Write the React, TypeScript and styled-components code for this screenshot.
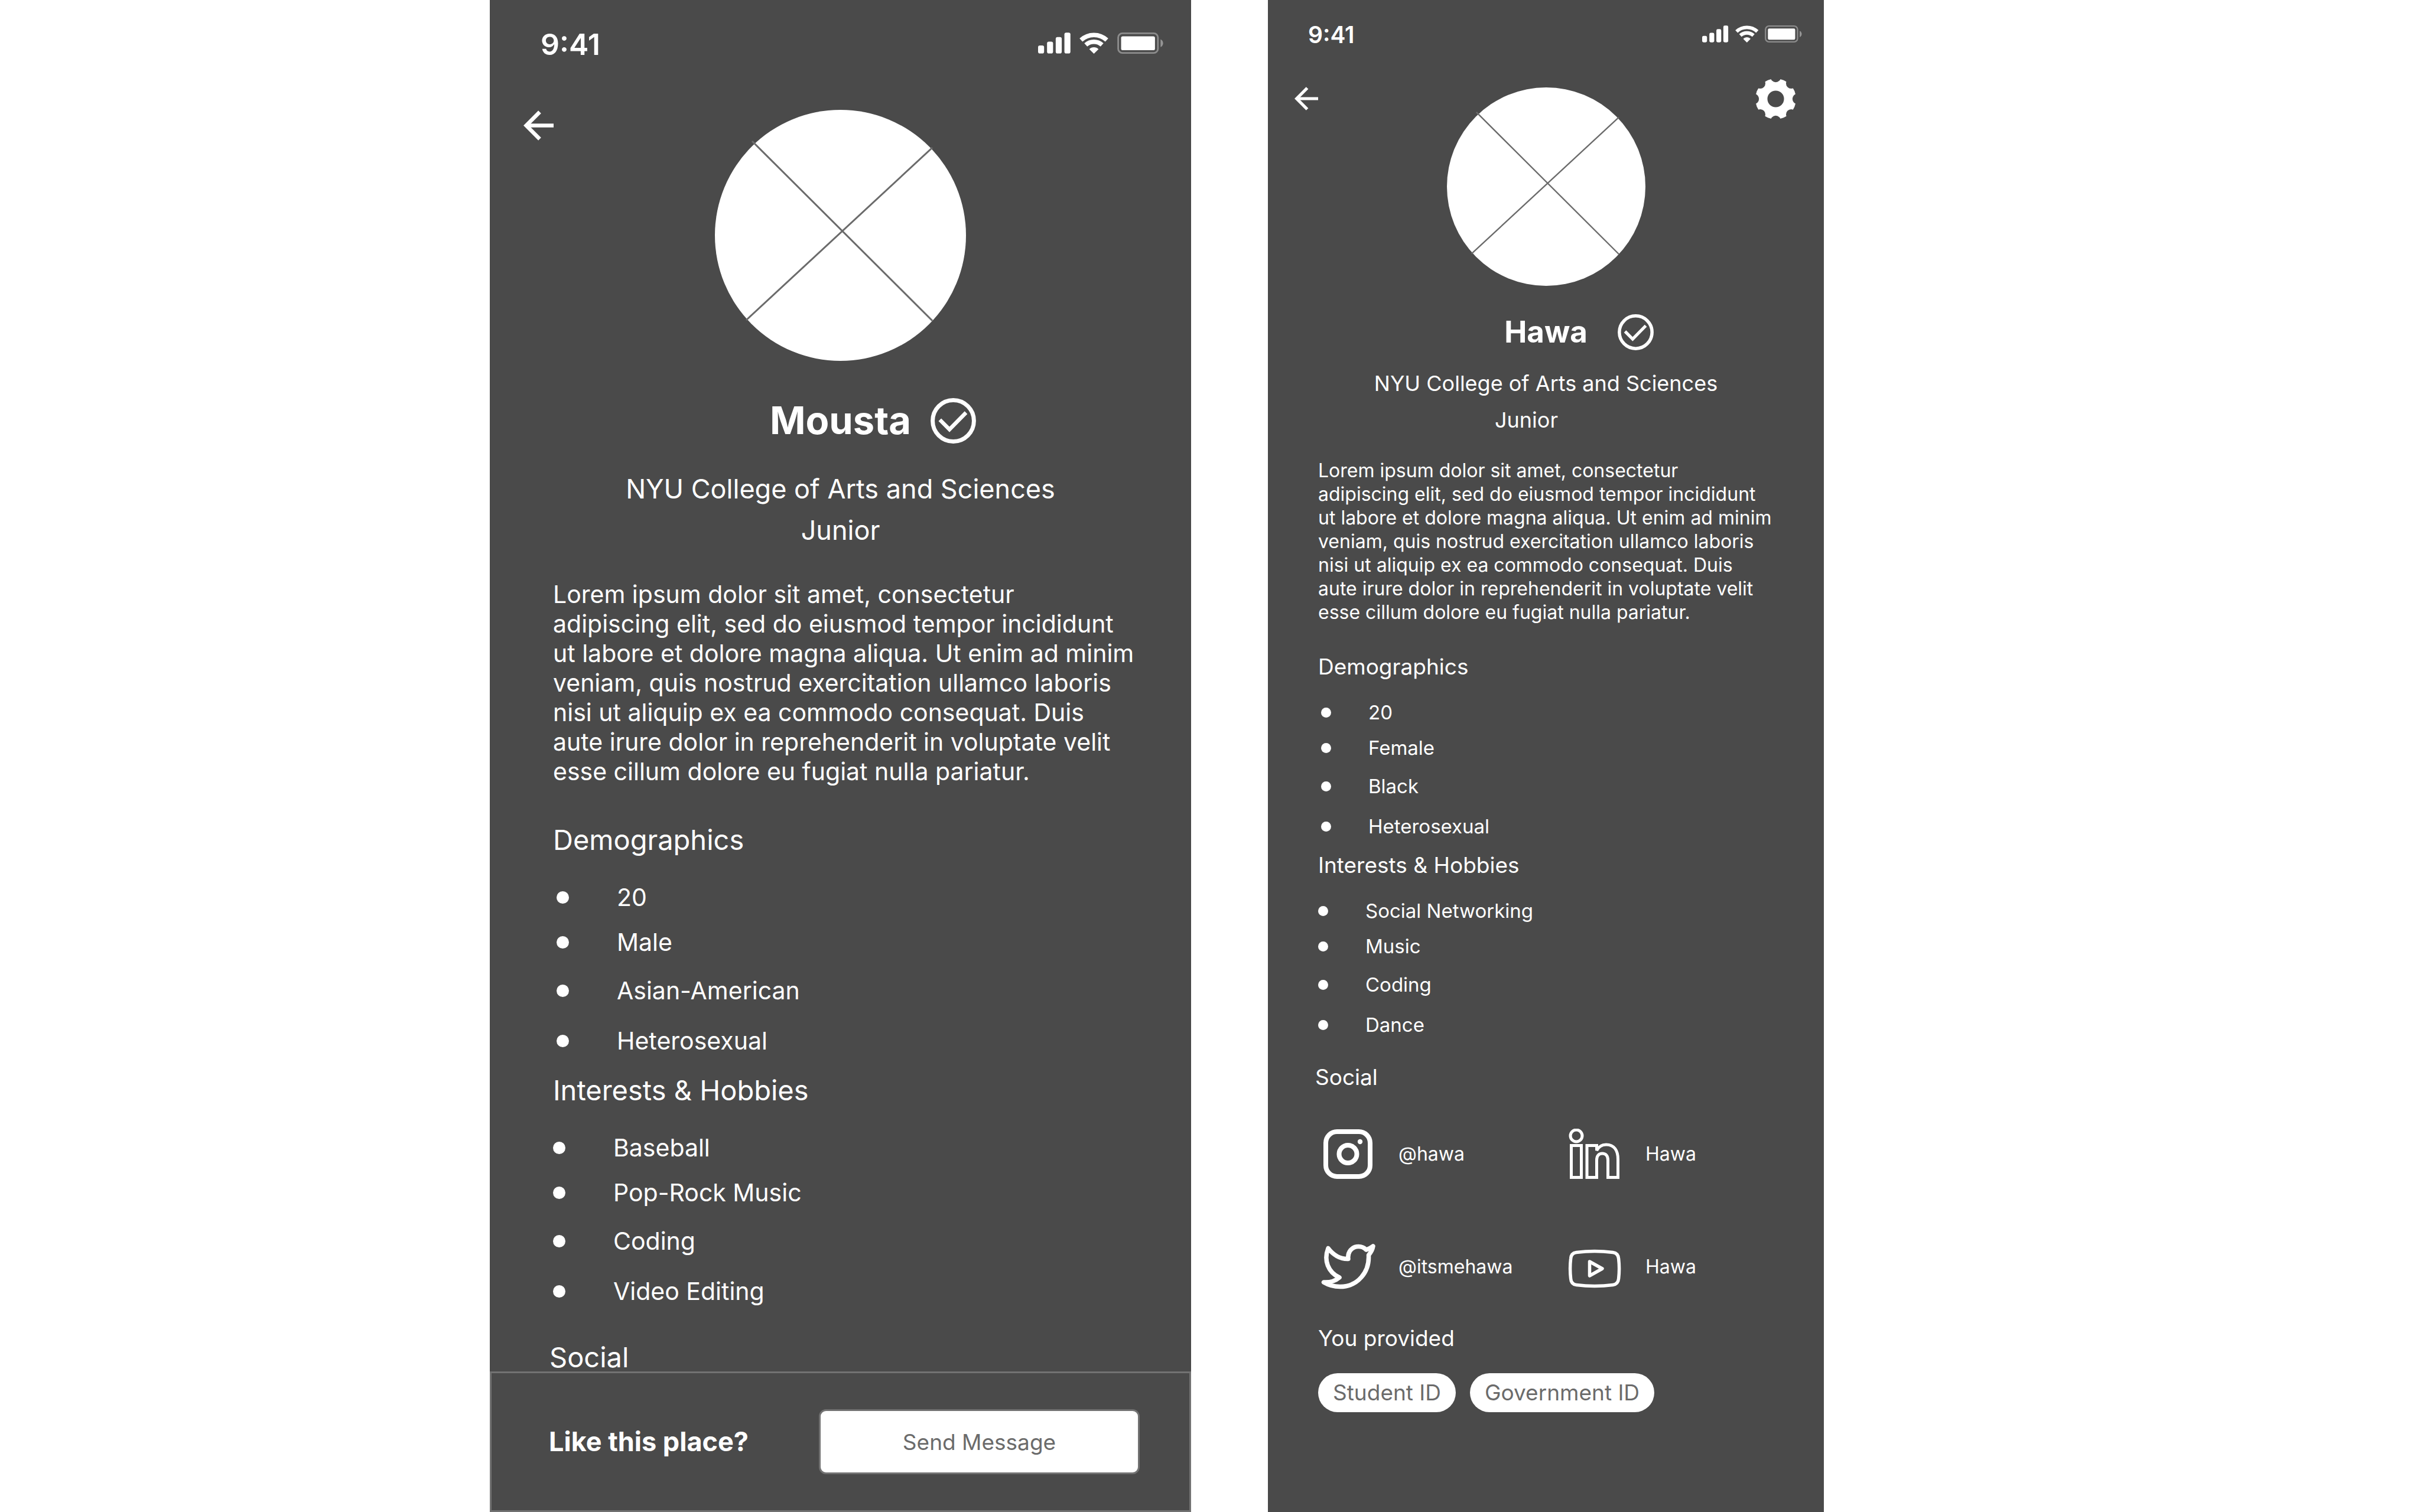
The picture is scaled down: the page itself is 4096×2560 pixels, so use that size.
import React, { useId } from "react";
import styled, { ThemeProvider, createGlobalStyle } from "styled-components";

interface Device {
  statusTop: number;
  statusLeft: number;
  statusRight: number;
  statusHeight: number;
  time: number;
  timeLine: number;
  glyph: number;
  glyphGap: number;
  navLeft: number;
  navRight: number;
  navHeight: number;
  arrow: number;
  gear: number;
  avatar: number;
  avatarTop: number;
  name: number;
  nameTop: number;
  nameHeight: number;
  nameWidth: number;
  badge: number;
  title: number;
  titleTop: number;
  titleLine: number;
  yearInset: number;
  gutter: number;
  step: number;
  body: number;
  bodyLine: number;
  bodyTop: number;
  item: number;
  heading: number;
  headingLine: number;
  headingGap: number;
  demographicsTop: number;
  interestsTop: number;
  socialTop: number;
  rows: string;
  dot: number;
  dotGap: number;
}

declare module "styled-components" {
  export interface DefaultTheme extends Device {}
}

const large: Device = {
  statusTop: 46,
  statusLeft: 86,
  statusRight: 47,
  statusHeight: 168,
  time: 50,
  timeLine: 58,
  glyph: 36,
  glyphGap: 15,
  navLeft: 57,
  navRight: 57,
  navHeight: 88,
  arrow: 51,
  gear: 87,
  avatar: 425,
  avatarTop: 18,
  name: 65,
  nameTop: 62,
  nameHeight: 78,
  nameWidth: 305,
  badge: 77,
  title: 45,
  titleTop: 42,
  titleLine: 70,
  yearInset: 0,
  gutter: 101,
  step: 6,
  body: 41,
  bodyLine: 50,
  bodyTop: 48,
  item: 41,
  heading: 47,
  headingLine: 44,
  headingGap: 40,
  demographicsTop: 69,
  interestsTop: 18,
  socialTop: 46,
  rows: "70px 82px 82px 88px",
  dot: 21,
  dotGap: 81,
};

const compact: Device = {
  statusTop: 36,
  statusLeft: 68,
  statusRight: 37,
  statusHeight: 132,
  time: 39,
  timeLine: 46,
  glyph: 29,
  glyphGap: 11,
  navLeft: 45,
  navRight: 47,
  navHeight: 70,
  arrow: 40,
  gear: 69,
  avatar: 336,
  avatarTop: 16,
  name: 51,
  nameTop: 47,
  nameHeight: 62,
  nameWidth: 242,
  badge: 61,
  title: 36,
  titleTop: 25,
  titleLine: 62,
  yearInset: 66,
  gutter: 80,
  step: 5,
  body: 32,
  bodyLine: 40,
  bodyTop: 35,
  item: 33,
  heading: 37,
  headingLine: 46,
  headingGap: 26,
  demographicsTop: 49,
  interestsTop: 8,
  socialTop: 31,
  rows: "56px 64px 66px 70px",
  dot: 17,
  dotGap: 63,
};

const GlobalStyle = createGlobalStyle`
  *, *::before { box-sizing: border-box; }
  body { margin: 0; background: #fff; }
  h1, h2, p, ul { margin: 0; padding: 0; font-weight: 400; }
  ul { list-style: none; }
  button { font: inherit; color: inherit; background: none; border: 0; padding: 0; cursor: pointer; }
  svg { display: block; }
`;

const Board = styled.div`
  display: grid;
  grid-template-columns: 829fr 1187fr 130fr 941fr 1009fr;
  min-height: 100vh;
  font-family: Inter, "Liberation Sans", sans-serif;
`;

const Phone = styled.main<{ $column: number }>`
  grid-column: ${(p) => p.$column};
  display: flex;
  flex-direction: column;
  height: 100vh;
  background: #4a4a4a;
  color: #fff;
`;

const Body = styled.div`
  flex: 1;
  min-height: 0;
`;

const StatusBar = styled.header`
  display: flex;
  align-items: flex-start;
  justify-content: space-between;
  height: ${(p) => p.theme.statusHeight}px;
  padding: ${(p) => `${p.theme.statusTop}px ${p.theme.statusRight}px 0 ${p.theme.statusLeft}px`};
`;

const Time = styled.time`
  font-size: ${(p) => p.theme.time}px;
  line-height: ${(p) => p.theme.timeLine}px;
  font-weight: 600;
`;

const Glyphs = styled.div`
  display: flex;
  align-items: center;
  gap: ${(p) => p.theme.glyphGap}px;
  height: ${(p) => p.theme.timeLine - 4}px;

  svg {
    height: ${(p) => p.theme.glyph}px;
    width: auto;
  }
`;

const Hero = styled.div`
  display: grid;
  grid-template-columns: 1fr auto 1fr;
  align-items: start;
`;

const NavButton = styled.button<{ $side: "left" | "right" }>`
  display: flex;
  align-items: center;
  justify-self: ${(p) => (p.$side === "left" ? "start" : "end")};
  height: ${(p) => p.theme.navHeight}px;
  margin-left: ${(p) => (p.$side === "left" ? p.theme.navLeft : 0)}px;
  margin-right: ${(p) => (p.$side === "right" ? p.theme.navRight : 0)}px;
`;

const Avatar = styled.svg`
  width: ${(p) => p.theme.avatar}px;
  height: ${(p) => p.theme.avatar}px;
  margin-top: ${(p) => p.theme.avatarTop}px;
`;

const NameRow = styled.div`
  display: grid;
  grid-template-columns: 1fr ${(p) => p.theme.nameWidth}px 1fr;
  align-items: center;
  height: ${(p) => p.theme.nameHeight}px;
  margin-top: ${(p) => p.theme.nameTop}px;
`;

const Name = styled.h1`
  grid-column: 2;
  text-align: center;
  font-size: ${(p) => p.theme.name}px;
  line-height: ${(p) => p.theme.nameHeight}px;
  font-weight: 700;
`;

const Titles = styled.div`
  margin-top: ${(p) => p.theme.titleTop}px;
  text-align: center;
  font-size: ${(p) => p.theme.title}px;
  line-height: ${(p) => p.theme.titleLine}px;
`;

const Year = styled.p`
  padding-right: ${(p) => p.theme.yearInset}px;
`;

const Details = styled.div`
  padding-left: ${(p) => p.theme.gutter}px;
`;

const Bio = styled.p`
  margin-top: ${(p) => p.theme.bodyTop}px;
  margin-left: ${(p) => p.theme.step}px;
  font-size: ${(p) => p.theme.body}px;
  line-height: ${(p) => p.theme.bodyLine}px;
  white-space: pre-line;
`;

const Heading = styled.h2<{ $level: number; $top: number }>`
  margin-top: ${(p) => p.$top}px;
  margin-left: ${(p) => p.$level * p.theme.step}px;
  font-size: ${(p) => p.theme.heading}px;
  line-height: ${(p) => p.theme.headingLine}px;
`;

const Facts = styled.ul<{ $level: number }>`
  display: grid;
  grid-template-rows: ${(p) => p.theme.rows};
  margin-top: ${(p) => p.theme.headingGap}px;
  margin-left: ${(p) => p.$level * p.theme.step}px;
  font-size: ${(p) => p.theme.item}px;
`;

const Fact = styled.li`
  display: flex;
  align-items: center;
  gap: ${(p) => p.theme.dotGap}px;

  &::before {
    content: "";
    width: ${(p) => p.theme.dot}px;
    height: ${(p) => p.theme.dot}px;
    border-radius: 50%;
    background: #fff;
  }
`;

const Footer = styled.footer`
  display: flex;
  align-items: center;
  justify-content: space-between;
  height: 238px;
  padding: 0 84px 0 97px;
  border: 3px solid #727272;
`;

const Question = styled.p`
  font-size: 45px;
  line-height: 58px;
  font-weight: 700;
`;

const SendButton = styled.button`
  width: 543px;
  height: 110px;
  border: 3px solid #727272;
  border-radius: 12px;
  background: #fff;
  color: #6b6b6b;
  font-size: 37px;
`;

const Accounts = styled.ul`
  display: grid;
  grid-template-columns: 418px 1fr;
  row-gap: 105px;
  margin: 64px 0 0 10px;
`;

const Account = styled.a`
  display: flex;
  align-items: center;
  gap: 39px;
  color: inherit;
  text-decoration: none;
  font-size: 32px;
  line-height: 86px;
`;

const Chips = styled.ul`
  display: flex;
  gap: 24px;
  margin: 36px 0 0 5px;
`;

const Chip = styled.li`
  padding: 0 25px;
  border-radius: 33px;
  background: #fff;
  color: #6b6b6b;
  font-size: 37px;
  line-height: 66px;
`;

const Signal = () => (
  <svg viewBox="0 0 232 150" width="55" height="36" fill="#fff" aria-hidden="true">
    <rect x="0" y="92" width="43" height="57" rx="13" />
    <rect x="64" y="64" width="43" height="85" rx="13" />
    <rect x="126" y="32" width="43" height="117" rx="13" />
    <rect x="188" y="0" width="43" height="149" rx="13" />
  </svg>
);

const Wifi = () => (
  <svg viewBox="0 0 206 152" width="49" height="36" fill="none" stroke="#fff" strokeWidth="31" aria-hidden="true">
    <path d="M11 54A135 135 0 0 1 195 54" />
    <path d="M45 89A86 86 0 0 1 161 89" />
    <path d="M103 152L70 119A47 47 0 0 1 136 119Z" fill="#fff" stroke="none" />
  </svg>
);

const Battery = () => (
  <svg viewBox="0 0 328 152" width="78" height="36" aria-hidden="true">
    <rect x="6" y="6" width="284" height="140" rx="30" fill="none" stroke="#8c8c8c" strokeWidth="12" />
    <rect x="27" y="27" width="242" height="100" rx="12" fill="#fff" />
    <path d="M309 49C333 60 333 94 309 105Z" fill="#959595" />
  </svg>
);

const BackArrow = ({ size }: { size: number }) => (
  <svg viewBox="0 0 217 217" width={size} height={size} fill="none" stroke="#fff" strokeWidth="28" aria-hidden="true">
    <path d="M117 11L20 108.500L117 206" />
    <path d="M24 108.500H217" />
  </svg>
);

const notches = [0, 45, 90, 135, 180, 225, 270, 315];

const Gear = ({ size }: { size: number }) => {
  const id = useId();
  return (
    <svg viewBox="0 0 290 290" width={size} height={size} aria-hidden="true">
      <mask id={id}>
        <rect width="290" height="290" fill="#fff" />
        <circle cx="145" cy="145" r="59" fill="#000" />
        {notches.map((a) => (
          <circle key={a} cx="145" cy="-11" r="37" fill="#000" transform={`rotate(${a} 145 145)`} />
        ))}
      </mask>
      <circle cx="145" cy="145" r="145" fill="#fff" mask={`url(#${id})`} />
    </svg>
  );
};

const Verified = ({ size }: { size: number }) => (
  <svg viewBox="0 0 322 322" width={size} height={size} fill="none" stroke="#fff" role="img" aria-label="Verified">
    <circle cx="161" cy="161" r="146" strokeWidth="29" />
    <path d="M66 154L134 222L251 103" strokeWidth="27" />
  </svg>
);

const Portrait = () => (
  <Avatar viewBox="0 0 425 425" role="img" aria-label="Profile photo">
    <circle cx="212.500" cy="212.500" r="212.500" fill="#fff" />
    <path d="M63 53L368 357M368 64L53 356" stroke="#6b6b6b" strokeWidth="3" />
  </Avatar>
);

const iconProps = {
  viewBox: "0 0 92 86",
  width: 92,
  height: 86,
  fill: "none",
  stroke: "#fff",
  "aria-hidden": true,
} as const;

const Instagram = () => (
  <svg {...iconProps} strokeWidth="8">
    <rect x="8" y="5" width="75" height="76" rx="19" />
    <circle cx="45.500" cy="43" r="15" />
    <circle cx="66" cy="22" r="4.200" fill="#fff" stroke="none" />
  </svg>
);

const LinkedIn = () => (
  <svg {...iconProps} strokeWidth="5">
    <circle cx="14" cy="12" r="10" />
    <rect x="5.500" y="28.500" width="17" height="54" />
    <path d="M32 28.500H48.500V37C52 30 57 27 64.500 27C78 27 84.500 37 84.500 52V82.500H67.500V53C67.500 46 64 42 58 42C52 42 48.500 46 48.500 53V82.500H32Z" />
  </svg>
);

const Twitter = () => (
  <svg {...iconProps} strokeWidth="7.500" strokeLinejoin="round">
    <path d="M12 11.500C20 22 32 30 46 29.500C44.500 18 52 8.600 63.500 8.600C69 8.600 73 10.500 76.500 14C81 12.500 85 10.500 88 8C87 14 84 19 80.500 23C82 52 62 76.500 32 76.500C22 76.500 12 73.500 4.500 69C14 69.500 24 67 31 61C12 52 4 32 12 11.500Z" />
  </svg>
);

const YouTube = () => (
  <svg {...iconProps} strokeWidth="5.500" strokeLinejoin="round">
    <path d="M14 18.500C34 16 56 16 76 18.500C82 19.300 85 23 85.600 29C87 41 87 51 85.600 63C85 69 82 72.700 76 73.500C56 76 34 76 14 73.500C8 72.700 5 69 4.600 63C3.200 51 3.200 41 4.600 29C5 23 8 19.300 14 18.500Z" />
    <path d="M36.500 34L58 46L36.500 58Z" />
  </svg>
);

const bio = `Lorem ipsum dolor sit amet, consectetur
adipiscing elit, sed do eiusmod tempor incididunt
ut labore et dolore magna aliqua. Ut enim ad minim
veniam, quis nostrud exercitation ullamco laboris
nisi ut aliquip ex ea commodo consequat. Duis
aute irure dolor in reprehenderit in voluptate velit
esse cillum dolore eu fugiat nulla pariatur.`;

const accounts = [
  { label: "Instagram", handle: "@hawa", Icon: Instagram },
  { label: "LinkedIn", handle: "Hawa", Icon: LinkedIn },
  { label: "Twitter", handle: "@itsmehawa", Icon: Twitter },
  { label: "YouTube", handle: "Hawa", Icon: YouTube },
];

interface ProfileProps {
  device: Device;
  name: string;
  demographics: string[];
  interests: string[];
  settings?: boolean;
  children?: React.ReactNode;
}

const Profile = ({ device, name, demographics, interests, settings, children }: ProfileProps) => (
  <Body>
    <StatusBar>
      <Time>9:41</Time>
      <Glyphs>
        <Signal />
        <Wifi />
        <Battery />
      </Glyphs>
    </StatusBar>
    <Hero>
      <NavButton $side="left" aria-label="Back">
        <BackArrow size={device.arrow} />
      </NavButton>
      <Portrait />
      {settings && (
        <NavButton $side="right" aria-label="Settings">
          <Gear size={device.gear} />
        </NavButton>
      )}
    </Hero>
    <NameRow>
      <Name>{name}</Name>
      <Verified size={device.badge} />
    </NameRow>
    <Titles>
      <p>NYU College of Arts and Sciences</p>
      <Year>Junior</Year>
    </Titles>
    <Details>
      <Bio>{bio}</Bio>
      <Heading $level={1} $top={device.demographicsTop}>Demographics</Heading>
      <Facts $level={2}>
        {demographics.map((d) => (
          <Fact key={d}>{d}</Fact>
        ))}
      </Facts>
      <Heading $level={1} $top={device.interestsTop}>Interests &amp; Hobbies</Heading>
      <Facts $level={1}>
        {interests.map((i) => (
          <Fact key={i}>{i}</Fact>
        ))}
      </Facts>
      <Heading $level={0} $top={device.socialTop}>Social</Heading>
      {children}
    </Details>
  </Body>
);

export default function App() {
  return (
    <>
      <GlobalStyle />
      <Board>
        <ThemeProvider theme={large}>
          <Phone $column={2}>
            <Profile
              device={large}
              name="Mousta"
              demographics={["20", "Male", "Asian-American", "Heterosexual"]}
              interests={["Baseball", "Pop-Rock Music", "Coding", "Video Editing"]}
            />
            <Footer>
              <Question>Like this place?</Question>
              <SendButton>Send Message</SendButton>
            </Footer>
          </Phone>
        </ThemeProvider>
        <ThemeProvider theme={compact}>
          <Phone $column={4}>
            <Profile
              device={compact}
              name="Hawa"
              demographics={["20", "Female", "Black", "Heterosexual"]}
              interests={["Social Networking", "Music", "Coding", "Dance"]}
              settings
            >
              <Accounts>
                {accounts.map(({ label, handle, Icon }) => (
                  <li key={label}>
                    <Account href="#" aria-label={`${label} ${handle}`}>
                      <Icon />
                      {handle}
                    </Account>
                  </li>
                ))}
              </Accounts>
              <Heading $level={1} $top={55}>You provided</Heading>
              <Chips>
                <Chip>Student ID</Chip>
                <Chip>Government ID</Chip>
              </Chips>
            </Profile>
          </Phone>
        </ThemeProvider>
      </Board>
    </>
  );
}
